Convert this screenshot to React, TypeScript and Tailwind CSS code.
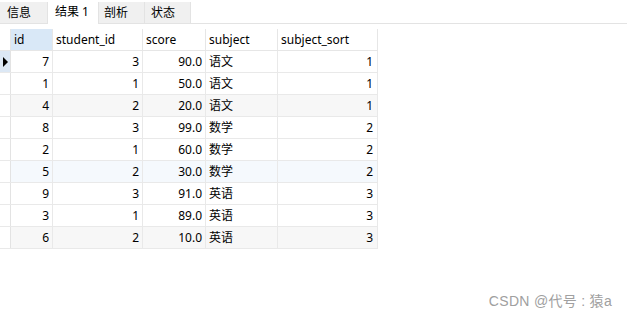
import React from "react";

const rows: [string, string, string, string, string][] = [
  ["7", "3", "90.0", "语文", "1"],
  ["1", "1", "50.0", "语文", "1"],
  ["4", "2", "20.0", "语文", "1"],
  ["8", "3", "99.0", "数学", "2"],
  ["2", "1", "60.0", "数学", "2"],
  ["5", "2", "30.0", "数学", "2"],
  ["9", "3", "91.0", "英语", "3"],
  ["3", "1", "89.0", "英语", "3"],
  ["6", "2", "10.0", "英语", "3"],
];

const font = { fontFamily: '"Noto Sans", "Noto Sans CJK SC", sans-serif' };

export default function App() {
  return (
    <div
      className="w-[627px] h-[320px] bg-white text-[12px] text-black relative overflow-hidden"
      style={font}
    >
      {/* tab bar */}
      <div className="flex h-[24px] items-end border-b border-[#e3e3e3]">
        <div className="w-[48px] h-[21px] bg-[#f0f0f0] border-r border-[#e3e3e3] flex items-center pl-[7px]">信息</div>
        <div className="w-[50px] h-[24px] bg-white flex items-center pl-[7px] -mb-px">结果 1</div>
        <div className="w-[47px] h-[21px] bg-[#f0f0f0] border-l border-r border-[#e3e3e3] flex items-center pl-[5px]">剖析</div>
        <div className="w-[46px] h-[21px] bg-[#f0f0f0] border-r border-[#e3e3e3] flex items-center pl-[6px]">状态</div>
      </div>

      {/* grid */}
      <div className="mt-[5px] w-[378px]">
        <div className="flex h-[22px] border-b border-[#e6e6e6]">
          <div className="w-[11px] border-r border-[#e6e6e6]" />
          <div className="w-[42px] bg-[#d9e8f7] border-r border-[#e6e6e6] flex items-center pl-[3px]">id</div>
          <div className="w-[90px] border-r border-[#e6e6e6] flex items-center pl-[3px]">student_id</div>
          <div className="w-[63px] border-r border-[#e6e6e6] flex items-center pl-[3px]">score</div>
          <div className="w-[72px] border-r border-[#e6e6e6] flex items-center pl-[3px]">subject</div>
          <div className="w-[100px] border-r border-[#e6e6e6] flex items-center pl-[3px]">subject_sort</div>
        </div>
        {rows.map((r, i) => {
          const bg = i === 2 || i === 8 ? "bg-[#f7f7f7]" : i === 5 ? "bg-[#f5f9fd]" : "bg-white";
          return (
            <div key={i} className={`flex h-[22px] border-b border-[#e9e9e9] ${bg}`}>
              <div
                className={`w-[11px] border-r border-[#e3e3e3] flex items-center pl-[3px] ${
                  i === 0 ? "bg-[#dce8f5]" : "bg-white"
                }`}
              >
                {i === 0 && (
                  <svg width="5" height="10" viewBox="0 0 5 10">
                    <polygon points="0,0 5,5 0,10" fill="#000" />
                  </svg>
                )}
              </div>
              <div className="w-[42px] border-r border-[#e9e9e9] flex items-center justify-end pr-[3px]">{r[0]}</div>
              <div className="w-[90px] border-r border-[#e9e9e9] flex items-center justify-end pr-[3px]">{r[1]}</div>
              <div className="w-[63px] border-r border-[#e9e9e9] flex items-center justify-end pr-[3px]">{r[2]}</div>
              <div className="w-[72px] border-r border-[#e9e9e9] flex items-center pl-[3px]">{r[3]}</div>
              <div className="w-[100px] border-r border-[#e9e9e9] flex items-center justify-end pr-[4px]">{r[4]}</div>
            </div>
          );
        })}
      </div>

      <div
        className="absolute right-[15px] bottom-[8px] text-[14px] text-[#a0a0a0] tracking-[0.3px]"
        style={{ fontFamily: '"Liberation Sans", "Noto Sans CJK SC", sans-serif' }}
      >
        CSDN @代号 : 猿a
      </div>
    </div>
  );
}
